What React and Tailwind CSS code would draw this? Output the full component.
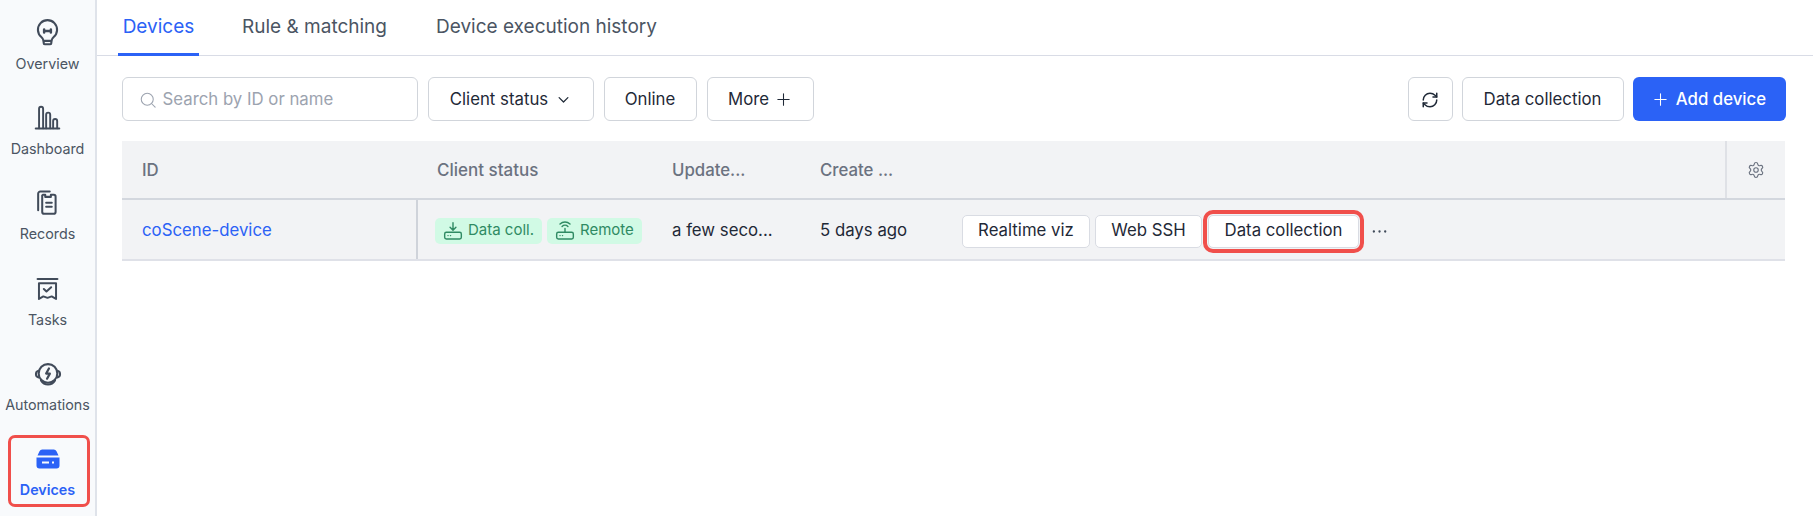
import React from "react";
import { Settings, RefreshCw } from "lucide-react";

const Ic = ({ children, className = "", size = 24, vb = 24, sw = 1.6 }) => (
  <svg width={size} height={size} viewBox={`0 0 ${vb} ${vb}`} fill="none" stroke="currentColor" strokeWidth={sw} strokeLinecap="round" strokeLinejoin="round" className={className}>{children}</svg>
);

const Overview = () => (
  <Ic size={27} sw={1.9}>
    <path d="M8.400 19.400c0-1.500-.6-2.300-1.900-3.400a8.500 8.500 0 1 1 11 0c-1.300 1.100-1.900 1.900-1.900 3.400z" />
    <path d="M8.600 19.600h6.800v1.800a1 1 0 0 1-1 1h-4.800a1 1 0 0 1-1-1z" />
    <path d="M9 9.300v2.800M15 9.300v2.800M9 10.700h6" strokeWidth="2.200" />
  </Ic>
);
const Dashboard = () => (
  <Ic size={27} sw={1.7}>
    <path d="M1.500 21.800h21" />
    <path d="M4.500 21.500V4.300a1.800 1.800 0 0 1 3.600 0v17.200" />
    <path d="M10.800 21.500V9.500a1.800 1.800 0 0 1 3.600 0v12" />
    <path d="M17 21.500v-6.300a1.800 1.800 0 0 1 3.600 0v6.300" />
  </Ic>
);
const Records = () => (
  <Ic size={27} sw={1.8}>
    <path d="M14 2.200H5.700a2 2 0 0 0-2 2v14.600" />
    <path d="M7.800 5.200H10v1.800h5V5.200h2.600a1.600 1.600 0 0 1 1.600 1.600v13.600a1.600 1.600 0 0 1-1.600 1.600H8.900a1.600 1.600 0 0 1-1.600-1.600V5.700z" />
    <path d="M10.800 12.300h5M10.800 15.800h5" />
  </Ic>
);
const Tasks = () => (
  <Ic size={25} sw={1.9}>
    <path d="M2.500 2.800h19" strokeWidth="2" />
    <path d="M3.800 7h16.400v15l-4.200-2.400-4 1.400-4-1.400-4.200 2.400z" />
    <path d="M8.500 12.500l2.500 2.300 4.500-4" strokeWidth="2" />
  </Ic>
);
const Automations = () => (
  <Ic size={28} sw={1.8}>
    <circle cx="12" cy="11.500" r="8" />
    <path d="M3.900 9.200a3 3 0 0 0-2.200 3c0 1.300.8 2.300 2.300 2.800M20.100 9.200a3 3 0 0 1 2.200 3c0 1.300-.8 2.300-2.300 2.800" />
    <path d="M6 17.500c1.500 2.500 3.600 3.500 6 3.500s4.500-1 6-3.500" />
    <path d="M12.800 7.300l-2.400 4.400h3.200l-2.400 4.300" strokeWidth="1.900" />
  </Ic>
);
const DevicesIcon = () => (
  <svg width="24" height="24" viewBox="0 0 24 24" fill="#2b62f6">
    <path d="M6.200 2.500h11.600a3 3 0 0 1 2.700 1.700l2 4.300H1.500l2-4.300a3 3 0 0 1 2.700-1.700z" />
    <path fillRule="evenodd" d="M.5 10.500h23v8a3 3 0 0 1-3 3h-17a3 3 0 0 1-3-3zM6 14.500v2h7v-2zM16 14.500v2h2v-2z" />
  </svg>
);

const NavItem = ({ label, icon, active }) => (
  <div className={`relative flex h-[85.4px] w-full shrink-0 flex-col items-center ${active ? "font-semibold text-[#2b62f6]" : "text-[#4b5563]"}`}>
    {active && <span className="absolute -top-[12px] left-[8px] h-[72px] w-[82px] rounded-[7px] border-[3.5px] border-[#f04f4b]" />}
    <div className="flex h-6 items-center justify-center text-[#414b5a]">{icon}</div>
    <div className="mt-[9.5px] text-[14.300px] leading-5 whitespace-nowrap">{label}</div>
  </div>
);

const Btn = ({ children, className = "" }) => (
  <button className={`flex h-[44px] items-center justify-center rounded-[6px] border border-[#d1d5db] bg-white pt-[1px] text-[16.800px] text-[#1f2937] ${className}`}>{children}</button>
);

const RowBtn = ({ children, className = "" }) => (
  <button className={`flex h-[33px] items-center justify-center rounded-[5px] border border-[#d9dce3] bg-white text-[16.800px] text-[#1f2937] ${className}`}>{children}</button>
);

const Tag = ({ icon, label, className }) => (
  <span className={`flex h-[26px] items-center gap-[5px] rounded-[5px] bg-[#d1fae5] pl-[8px] text-[15px] text-[#2f8a63] ${className}`}>{icon}{label}</span>
);

const TrayDown = () => (
  <Ic size={20} sw={1.7}>
    <rect x="2" y="13.500" width="20" height="8" rx="2" />
    <path d="M12 2v8.500M8.500 7.500l3.500 3.500 3.500-3.500M6 17.500h.1M9 17.500h.1" />
  </Ic>
);
const TrayWifi = () => (
  <Ic size={20} sw={1.7}>
    <rect x="2" y="13.500" width="20" height="8" rx="2" />
    <path d="M12 9v4.500M8.500 6.500a5 5 0 0 1 7 0M6 3.500a9 9 0 0 1 12 0M6 17.500h.1M9 17.500h.1" />
  </Ic>
);

export default function App() {
  return (
    <div className="flex h-[516px] w-[1813px] overflow-hidden bg-white font-['Inter',sans-serif]">
      <aside className="flex w-[97px] shrink-0 flex-col border-r-2 border-[#dfe3ea] bg-[#f8fafc] pt-[20px]">
        <NavItem label="Overview" icon={<Overview />} />
        <NavItem label="Dashboard" icon={<Dashboard />} />
        <NavItem label="Records" icon={<Records />} />
        <NavItem label="Tasks" icon={<Tasks />} />
        <NavItem label="Automations" icon={<Automations />} />
        <NavItem label="Devices" icon={<DevicesIcon />} active />
      </aside>
      <main className="flex min-w-0 flex-1 flex-col">
        <nav className="flex h-[56px] items-start border-b border-[#d9dce6] pl-[21px] text-[19px] text-[#4b5563]">
          <div className="flex h-[56px] w-[81px] items-start justify-center border-b-[3px] border-[#2b62f6] pt-[13px] text-[#2b62f6]">Devices</div>
          <div className="ml-[43px] pt-[13px]">Rule &amp; matching</div>
          <div className="ml-[49px] pt-[13px]">Device execution history</div>
        </nav>
        <div className="mt-[21px] flex items-center pl-[24.5px] pr-[27.5px]">
          <div className="flex h-[44px] w-[296px] items-center gap-[6px] rounded-[6px] border border-[#d1d5db] bg-white pl-[16px] pt-[1px] text-[16.800px] text-[#9ca3af]">
            <Ic size={18} sw={1.4}><circle cx="11" cy="11" r="8" /><path d="M17 17l4.500 4.500" /></Ic>
            Search by ID or name
          </div>
          <Btn className="ml-[10px] w-[166px] gap-[8px]">Client status<Ic size={15} sw={2}><path d="M5 9l7 7 7-7" /></Ic></Btn>
          <Btn className="ml-[10px] w-[93px]">Online</Btn>
          <Btn className="ml-[10px] w-[107px] gap-[6px]">More<Ic size={17} sw={1.500}><path d="M12 4v16M4 12h16" /></Ic></Btn>
          <Btn className="ml-auto w-[45px]">
            <RefreshCw size={18} strokeWidth={2} />
          </Btn>
          <Btn className="ml-[9px] w-[162px]">Data collection</Btn>
          <button className="ml-[9px] flex h-[44px] w-[153px] items-center justify-center gap-[7px] rounded-[6px] bg-[#2b62f6] pt-[1px] text-[16.800px] font-medium text-white">
            <Ic size={17} sw={1.500}><path d="M12 4v16M4 12h16" /></Ic>Add device
          </button>
        </div>
        <div className="ml-[25px] mr-[28px] mt-[20px] text-[16.800px]">
          <div className="grid h-[59px] grid-cols-[294px_236px_148px_150px_1fr_60px] items-center border-b-2 border-[#d3d7de] bg-[#f2f3f5] font-medium text-[#6b7280]">
            <div className="pl-[20px] pt-[2px]">ID</div>
            <div className="pl-[21px] pt-[2px] text-[17px]">Client status</div>
            <div className="pl-[20px] pt-[2px]">Update...</div>
            <div className="pl-[20px] pt-[2px]">Create ...</div>
            <div />
            <div className="flex h-full items-center justify-center border-l-2 border-[#dfe1e6] text-[#6b7280]">
              <Settings size={18} strokeWidth={1.500} />
            </div>
          </div>
          <div className="grid h-[61px] grid-cols-[294px_236px_148px_150px_1fr_60px] items-center border-b-2 border-[#dfe1e8] bg-[#f2f3f5] text-[#1f2937]">
            <div className="pl-[20px] pt-[3px] text-[#2b62f6]">coScene-device</div>
            <div className="flex h-full items-center gap-[5px] border-l-2 border-[#cfd3da] pl-[17px] pt-[2px]">
              <Tag icon={<TrayDown />} label="Data coll." className="w-[107px]" />
              <Tag icon={<TrayWifi />} label="Remote" className="w-[95px]" />
            </div>
            <div className="pl-[20px] pt-[3px] whitespace-nowrap">a few seco...</div>
            <div className="pl-[20px] pt-[3px]">5 days ago</div>
            <div className="col-span-2 flex items-center pl-[12px] pt-[3px]">
              <RowBtn className="w-[128px]">Realtime viz</RowBtn>
              <RowBtn className="ml-[5px] w-[107px]">Web SSH</RowBtn>
              <RowBtn className="ml-[6px] w-[151px] outline-[4px] outline-offset-[1px] outline-[#f04f4b]">Data collection</RowBtn>
              <div className="ml-[12px] text-[#414b5a]">
                <Ic size={17}><path d="M4 12h.1M12 12h.1M20 12h.1" strokeWidth="3.200" /></Ic>
              </div>
            </div>
          </div>
        </div>
      </main>
    </div>
  );
}
